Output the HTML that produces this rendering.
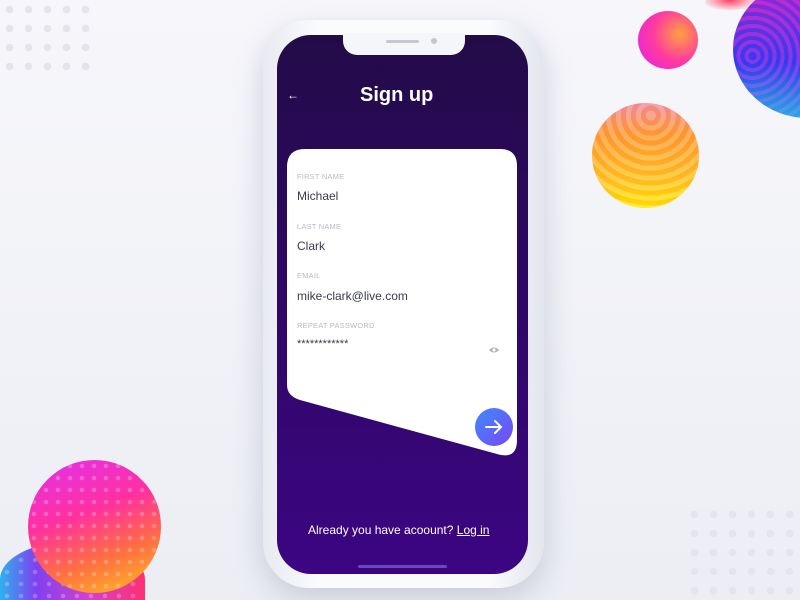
<!DOCTYPE html>
<html><head><meta charset="utf-8"><style>
*{margin:0;padding:0;box-sizing:border-box}
html,body{width:800px;height:600px;overflow:hidden}
body{font-family:"Liberation Sans",sans-serif}
#w{position:relative;width:800px;height:600px;overflow:hidden;background:linear-gradient(180deg,#f7f7fb,#eceef4)}
.dots{position:absolute;background-image:radial-gradient(circle,#e3e4ec 3.5px,transparent 4px);background-size:19px 19px}
.ball{position:absolute;border-radius:50%}
.phone{position:absolute;left:263px;top:20px;width:281px;height:568px;border-radius:46px;background:linear-gradient(90deg,#e9eaf1,#fafbfd 20%,#fafbfd 80%,#e3e5ee);box-shadow:0 10px 30px rgba(90,95,130,.25)}
.screen{position:absolute;left:277px;top:35px;width:251px;height:539px;border-radius:34px;background:linear-gradient(180deg,#230b48 0%,#2c0860 40%,#3c0583 100%);overflow:hidden}
.notch{position:absolute;left:343px;top:33px;width:122px;height:22px;background:#f5f6f9;border-radius:0 0 14px 14px}
.lbl{position:absolute;left:297px;font-size:7.5px;color:#b8b9c6;letter-spacing:.2px}
.val{position:absolute;left:297px;font-size:12px;color:#3a3b4f}
</style></head><body><div id="w">
<div class="dots" style="left:0;top:0;width:95px;height:80px"></div>
<div class="dots" style="left:685px;top:505px;width:115px;height:95px"></div>
<div class="ball" style="left:705px;top:0;width:50px;height:10px;border-radius:0 0 50% 50%;background:radial-gradient(ellipse at 50% 0,#ff4060,rgba(255,80,80,0) 80%)"></div>
<div class="ball" style="left:638px;top:11px;width:60px;height:58px;background:radial-gradient(circle at 70% 40%,#ffa040,#ff3aa0 50%,#e020f0 100%)"></div>
<div style="position:absolute;left:733px;top:0;width:67px;height:118px;overflow:hidden">
<div class="ball" style="left:0;top:-20px;width:150px;height:138px;background:repeating-radial-gradient(circle at 13% 55%,#3a30e8 0 4px,#a030e0 4px 8px)"></div>
<div class="ball" style="left:0;top:-20px;width:150px;height:138px;background:linear-gradient(180deg,rgba(255,30,180,.5),rgba(40,80,255,.3) 60%,rgba(30,220,230,.7))"></div>
</div>
<div class="ball" style="left:592px;top:103px;width:107px;height:105px;background:repeating-radial-gradient(circle at 55% 12%,rgba(255,255,255,.2) 0 5px,rgba(255,120,40,.12) 5px 10px),linear-gradient(180deg,#f08aa0 0%,#ff9a30 30%,#ffc020 70%,#ffe800 100%)"></div>
<div class="ball" style="left:0;top:542px;width:145px;height:58px;border-radius:75% 80% 0 0/100% 100% 0 0;background:radial-gradient(circle,rgba(255,255,255,.25) 2px,transparent 2.5px) 0 0/14px 12px,linear-gradient(90deg,#30b0f0,#8040f0 25%,#d040d0 60%,#ff3070)"></div>
<div class="ball" style="left:28px;top:460px;width:133px;height:133px;background:radial-gradient(circle,rgba(255,255,255,.25) 2px,transparent 2.5px) 0 0/12px 12px,linear-gradient(160deg,#e030f0 0%,#ff30a0 40%,#ff7040 70%,#ffc020 100%)"></div>
<div class="phone"></div>
<div class="screen"></div>
<div class="notch"></div>
<div style="position:absolute;left:386px;top:40px;width:33px;height:3px;border-radius:2px;background:#c4c6d2"></div>
<div style="position:absolute;left:431px;top:38px;width:6px;height:6px;border-radius:50%;background:#c4c6d2"></div>
<div style="position:absolute;left:287px;top:88px;color:#fff;font-size:12px">←</div>
<div style="position:absolute;left:360px;top:84px;color:#fff;font-size:20px;font-weight:bold">Sign up</div>
<svg style="position:absolute;left:0;top:0" width="800" height="600"><path d="M305 149 H500 Q517 149 517 166 V440 Q517 460 497 454 L300 400 Q287 396 287 385 V167 Q287 149 305 149Z" fill="#fff"/>
<defs><linearGradient id="g" x1="0" y1="0" x2="1" y2="1"><stop offset="0" stop-color="#3d8cff"/><stop offset="1" stop-color="#7a45f5"/></linearGradient></defs>
<circle cx="494" cy="427" r="19" fill="url(#g)"/>
<path d="M486 427h15M495 421l6 6-6 6" stroke="#fff" stroke-width="2" fill="none" stroke-linecap="round"/>
<path d="M489 350q5-5 10 0q-5 5-10 0z" fill="#b0b2bc"/><circle cx="494" cy="350" r="1.5" fill="#fff"/>
</svg>
<div class="lbl" style="top:172px">FIRST NAME</div><div class="val" style="top:189px">Michael</div>
<div class="lbl" style="top:222px">LAST NAME</div><div class="val" style="top:239px">Clark</div>
<div class="lbl" style="top:271px">EMAIL</div><div class="val" style="top:289px">mike-clark@live.com</div>
<div class="lbl" style="top:321px">REPEAT PASSWORD</div><div class="val" style="top:338px;font-size:11px">************</div>
<div style="position:absolute;left:308px;top:523px;color:#fff;font-size:12px">Already you have acoount? <u>Log in</u></div>
<div style="position:absolute;left:358px;top:565px;width:89px;height:3px;border-radius:2px;background:#6b48b8"></div>
</div></body></html>
